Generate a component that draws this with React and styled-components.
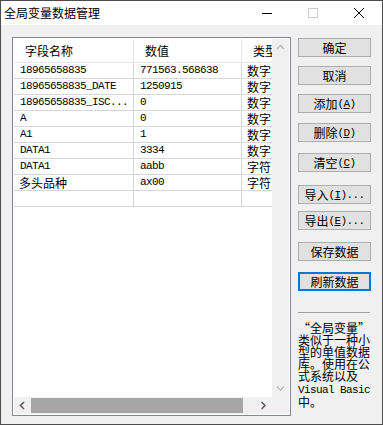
import React from 'react';
import styled, { createGlobalStyle } from 'styled-components';

const CJK = '"Noto Sans CJK SC", "Noto Sans", sans-serif';
const MONO = '"Liberation Mono", "DejaVu Sans Mono", "Noto Sans CJK SC", monospace';

const GlobalStyle = createGlobalStyle`
  html, body {
    margin: 0;
    padding: 0;
    background: #ffffff;
  }
  * {
    box-sizing: border-box;
  }
`;

const Window = styled.div`
  width: 383px;
  height: 425px;
  border: 1px solid #4d4d4d;
  display: flex;
  flex-direction: column;
  background: #f0f0f0;
  font-family: ${CJK};
  font-size: 12px;
  color: #000;
  overflow: hidden;
`;

const TitleBar = styled.div`
  height: 24px;
  flex-shrink: 0;
  background: #ffffff;
  display: flex;
  align-items: center;
`;

const Title = styled.div`
  flex: 1;
  padding-left: 3px;
  font-size: 12px;
  line-height: 24px;
  white-space: nowrap;
`;

const Caption = styled.div`
  width: 46px;
  height: 24px;
  display: flex;
  align-items: center;
  justify-content: center;
`;

const Client = styled.div`
  flex: 1;
  display: flex;
  gap: 7px;
  padding: 12px 11px 8px 11px;
`;

const ListBox = styled.div`
  width: 279px;
  height: 379px;
  border: 1px solid #828790;
  padding: 1px;
  background: #ffffff;
  display: grid;
  grid-template-columns: 1fr 17px;
  grid-template-rows: 1fr 17px;
`;

const Viewport = styled.div`
  overflow: hidden;
`;

const Table = styled.div`
  width: 320px;
`;

const Row = styled.div`
  display: grid;
  grid-template-columns: 120px 108px 92px;
  height: ${(p) => (p.$head ? 24 : 16)}px;
  border-bottom: 1px solid ${(p) => (p.$head ? '#e5e5e5' : '#d6d6d6')};
`;

const HeadCell = styled.div`
  padding-left: 11px;
  border-right: 1px solid #e5e5e5;
  line-height: 23px;
  font-size: 12px;
  white-space: nowrap;
  overflow: hidden;
`;

const Cell = styled.div`
  padding-left: ${(p) => (p.$cjk ? 5 : 6)}px;
  border-right: 1px solid #d6d6d6;
  white-space: nowrap;
  overflow: hidden;
  line-height: 15px;
  font-family: ${(p) => (p.$cjk ? CJK : MONO)};
  font-size: ${(p) => (p.$cjk ? 12 : 11)}px;
  letter-spacing: ${(p) => (p.$cjk ? 0 : -0.6)}px;
`;

const VScroll = styled.div`
  background: #f0f0f0;
  display: flex;
  flex-direction: column;
  justify-content: space-between;
  align-items: center;
`;

const HScroll = styled.div`
  background: #f0f0f0;
  display: flex;
  align-items: center;
`;

const Corner = styled.div`
  background: #f0f0f0;
`;

const Arrow = styled.div`
  width: 17px;
  height: 17px;
  flex-shrink: 0;
  display: flex;
  align-items: center;
  justify-content: center;
`;

const Thumb = styled.div`
  width: 212px;
  height: 15px;
  background: #a6a6a6;
`;

const Side = styled.div`
  width: 73px;
  display: flex;
  flex-direction: column;
`;

const Button = styled.div`
  margin-top: ${(p) => p.$mt}px;
  height: 19px;
  background: #e1e1e1;
  border: ${(p) => (p.$focus ? '2px solid #0078d7' : '1px solid #adadad')};
  display: flex;
  align-items: center;
  justify-content: center;
  font-size: 12px;
  white-space: nowrap;
`;

const Asc = styled.span`
  font-family: ${MONO};
  font-size: 11px;
  letter-spacing: -0.6px;
`;

const Separator = styled.div`
  margin-top: 21px;
  width: 72px;
  height: 1px;
  background: #a0a0a0;
`;

const Note = styled.div`
  margin-top: 9px;
  font-size: 12px;
  line-height: 12px;
  white-space: nowrap;
`;

const rows = [
  ['18965658835', '771563.568638', '数字'],
  ['18965658835_DATE', '1250915', '数字'],
  ['18965658835_ISC...', '0', '数字'],
  ['A', '0', '数字'],
  ['A1', '1', '数字'],
  ['DATA1', '3334', '数字'],
  ['DATA1', 'aabb', '字符'],
  ['多头品种', 'ax00', '字符', true],
  ['', '', ''],
];

const Chevron = ({ dir, color }) => {
  const pts = {
    up: '1,5 4.5,1.5 8,5',
    down: '1,1.5 4.5,5 8,1.5',
    left: '5,1 1.5,4.5 5,8',
    right: '1.5,1 5,4.5 1.5,8',
  }[dir];
  const vertical = dir === 'up' || dir === 'down';
  return (
    <svg width={vertical ? 9 : 7} height={vertical ? 7 : 9} viewBox={vertical ? '0 0 9 7' : '0 0 7 9'}>
      <polyline points={pts} fill="none" stroke={color} strokeWidth="1.6" />
    </svg>
  );
};

const Btn = ({ mt, focus, children }) => (
  <Button $mt={mt} $focus={focus}>{children}</Button>
);

export default function App() {
  return (
    <>
      <GlobalStyle />
      <Window>
        <TitleBar>
          <Title>全局变量数据管理</Title>
          <Caption>
            <svg width="10" height="10" viewBox="0 0 10 10">
              <line x1="0" y1="5.5" x2="10" y2="5.5" stroke="#000" strokeWidth="1" />
            </svg>
          </Caption>
          <Caption>
            <svg width="10" height="10" viewBox="0 0 10 10">
              <rect x="0.5" y="0.5" width="9" height="9" fill="none" stroke="#cccccc" strokeWidth="1" />
            </svg>
          </Caption>
          <Caption>
            <svg width="10" height="10" viewBox="0 0 10 10">
              <line x1="0" y1="0" x2="10" y2="10" stroke="#000" strokeWidth="1" />
              <line x1="10" y1="0" x2="0" y2="10" stroke="#000" strokeWidth="1" />
            </svg>
          </Caption>
        </TitleBar>
        <Client>
          <ListBox>
            <Viewport>
              <Table>
                <Row $head>
                  <HeadCell>字段名称</HeadCell>
                  <HeadCell>数值</HeadCell>
                  <HeadCell>类型</HeadCell>
                </Row>
                {rows.map(([name, value, type, cjk], i) => (
                  <Row key={i}>
                    <Cell $cjk={cjk}>{name}</Cell>
                    <Cell>{value}</Cell>
                    <Cell $cjk>{type}</Cell>
                  </Row>
                ))}
              </Table>
            </Viewport>
            <VScroll>
              <Arrow><Chevron dir="up" color="#c0c0c0" /></Arrow>
              <Arrow><Chevron dir="down" color="#c0c0c0" /></Arrow>
            </VScroll>
            <HScroll>
              <Arrow><Chevron dir="left" color="#606060" /></Arrow>
              <Thumb />
              <div style={{ flex: 1 }} />
              <Arrow><Chevron dir="right" color="#606060" /></Arrow>
            </HScroll>
            <Corner />
          </ListBox>
          <Side>
            <Btn mt={1}>确定</Btn>
            <Btn mt={9}>取消</Btn>
            <Btn mt={9}>添加<Asc>(<u>A</u>)</Asc></Btn>
            <Btn mt={10}>删除<Asc>(<u>D</u>)</Asc></Btn>
            <Btn mt={11}>清空<Asc>(<u>C</u>)</Asc></Btn>
            <Btn mt={13}>导入<Asc>(<u>I</u>)...</Asc></Btn>
            <Btn mt={7}>导出<Asc>(<u>E</u>)...</Asc></Btn>
            <Btn mt={12}>保存数据</Btn>
            <Btn mt={11} focus>刷新数据</Btn>
            <Separator />
            <Note>
              “全局变量”<br />
              类似于一种小<br />
              型的单值数据<br />
              库。使用在公<br />
              式系统以及<br />
              <Asc>Visual Basic</Asc><br />
              中。
            </Note>
          </Side>
        </Client>
      </Window>
    </>
  );
}
